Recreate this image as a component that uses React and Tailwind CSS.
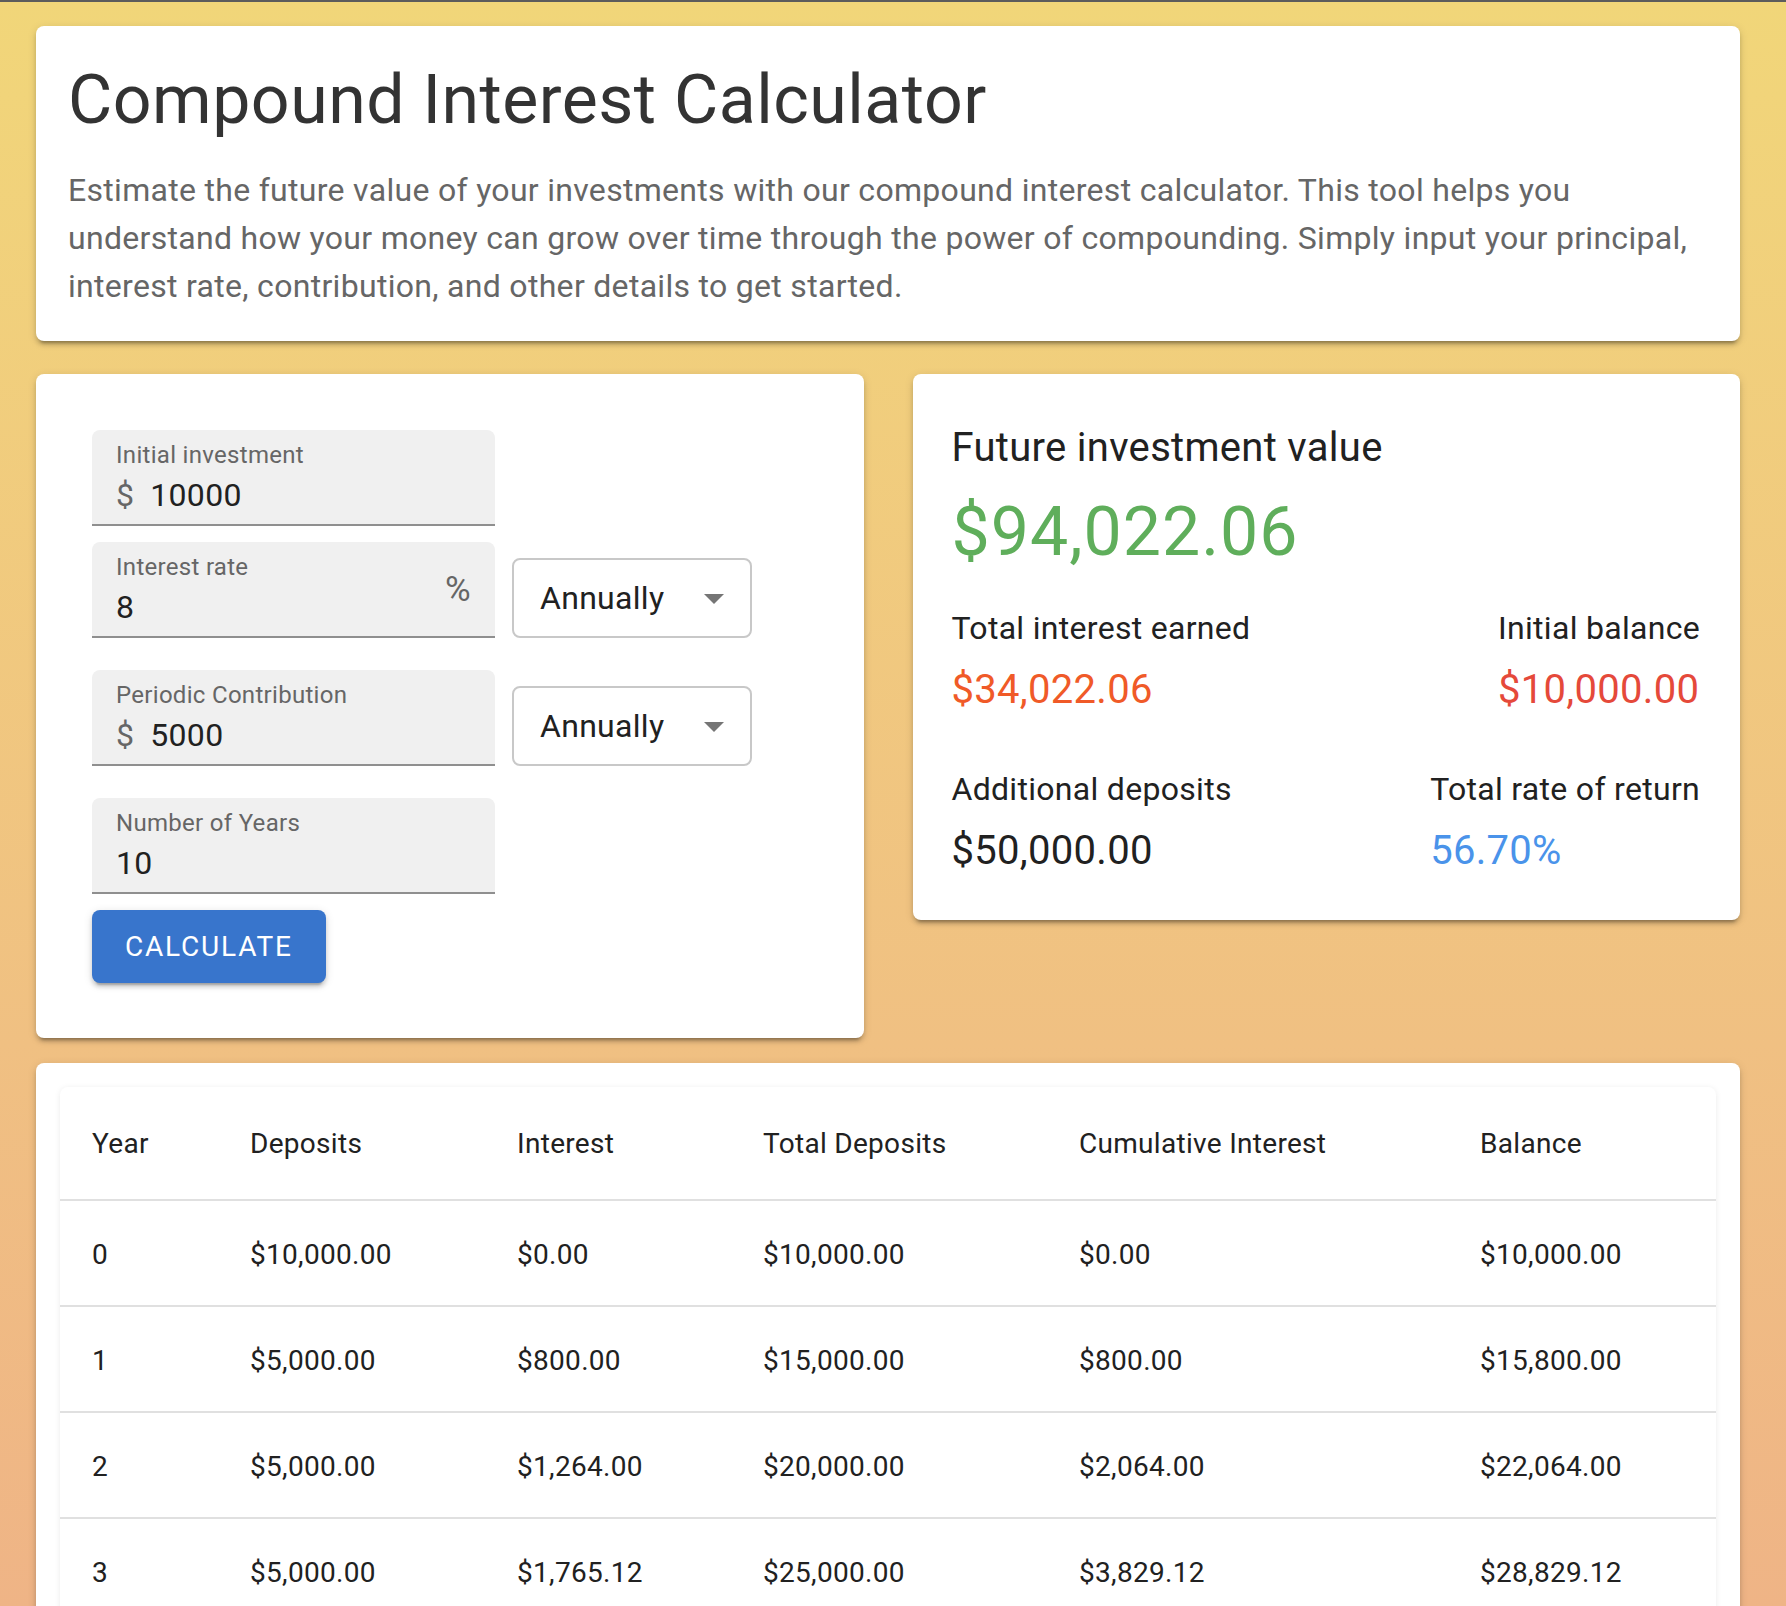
import React from "react";

const fmt = (n) =>
  "$" +
  n.toLocaleString("en-US", { minimumFractionDigits: 2, maximumFractionDigits: 2 });

function buildRows() {
  const rows = [];
  let balance = 10000;
  let totalDeposits = 10000;
  let cumInterest = 0;
  rows.push({ year: 0, deposits: 10000, interest: 0, totalDeposits, cumInterest, balance });
  for (let y = 1; y <= 10; y++) {
    const interest = Math.round(balance * 0.08 * 100) / 100;
    cumInterest += interest;
    totalDeposits += 5000;
    balance = balance + interest + 5000;
    rows.push({ year: y, deposits: 5000, interest, totalDeposits, cumInterest, balance });
  }
  return rows;
}

const cardShadow =
  "shadow-[0_6px_3px_-4px_rgba(0,0,0,0.25),0_4px_4px_0_rgba(0,0,0,0.14),0_2px_10px_0_rgba(0,0,0,0.12)]";

function Field({ label, value, prefix, suffix }) {
  return (
    <div className="flex h-[96px] w-[403px] items-center rounded-t-[8px] border-b-2 border-[#8f8f8f] bg-[#f0f0f0] pt-[8px] pb-[6px] pl-[24px] pr-[24px]">
      <div className="flex flex-1 flex-col">
        <div className="text-[24px] leading-[34px] text-[#666666]">{label}</div>
        <div className="flex h-[46px] items-center text-[32px] leading-[46px]">
          {prefix && <span className="mr-[16px] text-[#666666]">{prefix}</span>}
          <span className="text-[#212121]">{value}</span>
        </div>
      </div>
      {suffix && <span className="text-[35px] leading-[46px] text-[#666666]">{suffix}</span>}
    </div>
  );
}

function Select({ value }) {
  return (
    <div className="flex h-[80px] w-[240px] items-center rounded-[8px] border-2 border-[#c8c8c8] bg-white pl-[26px] pr-[12px]">
      <span className="text-[32px] leading-[46px] text-[#212121]">{value}</span>
      <svg className="ml-auto h-[48px] w-[48px]" viewBox="0 0 24 24">
        <path d="M7 10l5 5 5-5z" fill="#757575" />
      </svg>
    </div>
  );
}

function Stat({ label, value, color }) {
  return (
    <div>
      <div className="text-[32px] leading-[48px] text-[#212121]">{label}</div>
      <div className={"mt-[6px] text-[40px] leading-[64px] " + color}>{value}</div>
    </div>
  );
}

export default function App() {
  const rows = buildRows();
  return (
    <div className="min-h-screen w-full bg-gradient-to-b from-[#f1d679] to-[#efb486] bg-fixed font-[Roboto,sans-serif] tracking-[0.3px]">
      <div className="h-[2px] bg-[#5c5c5c]" />
      <div className="pl-[36px] pr-[46px] pt-[24px]">
        <div className={"rounded-[8px] bg-white pt-[32px] pb-[31px] px-[32px] " + cardShadow}>
          <h1 className="text-[68px] leading-[84px] tracking-[0.5px] text-[#333333]">
            Compound Interest Calculator
          </h1>
          <p className="mt-[24px] text-[32px] leading-[48px] text-[#666666]">
            Estimate the future value of your investments with our compound interest calculator. This tool
            helps you understand how your money can grow over time through the power of compounding. Simply
            input your principal, interest rate, contribution, and other details to get started.
          </p>
        </div>

        <div className="mt-[33px] grid grid-cols-2 items-start gap-[49px]">
          <div className={"rounded-[8px] bg-white pt-[56px] pb-[55px] pl-[56px] " + cardShadow}>
            <Field label="Initial investment" prefix="$" value="10000" />
            <div className="mt-[16px] flex items-end gap-[17px]">
              <Field label="Interest rate" value="8" suffix="%" />
              <Select value="Annually" />
            </div>
            <div className="mt-[32px] flex items-end gap-[17px]">
              <Field label="Periodic Contribution" prefix="$" value="5000" />
              <Select value="Annually" />
            </div>
            <div className="mt-[32px]">
              <Field label="Number of Years" value="10" />
            </div>
            <button className="mt-[16px] h-[73px] rounded-[8px] bg-[#3875cc] px-[33px] text-[28px] font-normal uppercase leading-[49px] tracking-[1.8px] text-white shadow-[0_6px_2px_-4px_rgba(0,0,0,0.2),0_4px_4px_0_rgba(0,0,0,0.14),0_2px_10px_0_rgba(0,0,0,0.12)]">
              Calculate
            </button>
          </div>

          <div className={"rounded-[8px] bg-white pt-[42px] pb-[37px] pl-[39px] pr-[40px] " + cardShadow}>
            <div className="text-[40px] leading-[64px] text-[#212121]">Future investment value</div>
            <div className="mt-[10px] text-[68px] leading-[84px] tracking-[1px] text-[#5fae5b]">
              $94,022.06
            </div>
            <div className="mt-[30px] flex justify-between">
              <Stat label="Total interest earned" value="$34,022.06" color="text-[#f05a28]" />
              <Stat label="Initial balance" value="$10,000.00" color="text-[#e5493a]" />
            </div>
            <div className="mt-[43px] flex justify-between">
              <Stat label="Additional deposits" value="$50,000.00" color="text-[#212121]" />
              <Stat label="Total rate of return" value="56.70%" color="text-[#4a93ea]" />
            </div>
          </div>
        </div>

        <div className={"mt-[25px] rounded-[8px] bg-white p-[24px] " + cardShadow}>
          <div className="rounded-[8px] bg-white shadow-[0_2px_2px_-1px_rgba(0,0,0,0.1),0_1px_6px_0_rgba(0,0,0,0.08)]">
            <table className="w-full table-fixed border-collapse text-left text-[28px] text-[#212121]">
              <thead>
                <tr>
                  {[
                    ["Year", "w-[158px]"],
                    ["Deposits", "w-[267px]"],
                    ["Interest", "w-[246px]"],
                    ["Total Deposits", "w-[316px]"],
                    ["Cumulative Interest", "w-[401px]"],
                    ["Balance", ""],
                  ].map(([h, w]) => (
                    <th
                      key={h}
                      className={"border-b-2 border-[#e0e0e0] pt-[33px] pb-[31px] pl-[32px] pr-[16px] font-normal leading-[48px] " + w}
                    >
                      {h}
                    </th>
                  ))}
                </tr>
              </thead>
              <tbody>
                {rows.map((r) => (
                  <tr key={r.year}>
                    {[
                      String(r.year),
                      fmt(r.deposits),
                      fmt(r.interest),
                      fmt(r.totalDeposits),
                      fmt(r.cumInterest),
                      fmt(r.balance),
                    ].map((c, i) => (
                      <td
                        key={i}
                        className="border-b-2 border-[#e0e0e0] pt-[34px] pb-[30px] pl-[32px] pr-[16px] leading-[40px]"
                      >
                        {c}
                      </td>
                    ))}
                  </tr>
                ))}
              </tbody>
            </table>
          </div>
        </div>
      </div>
    </div>
  );
}
